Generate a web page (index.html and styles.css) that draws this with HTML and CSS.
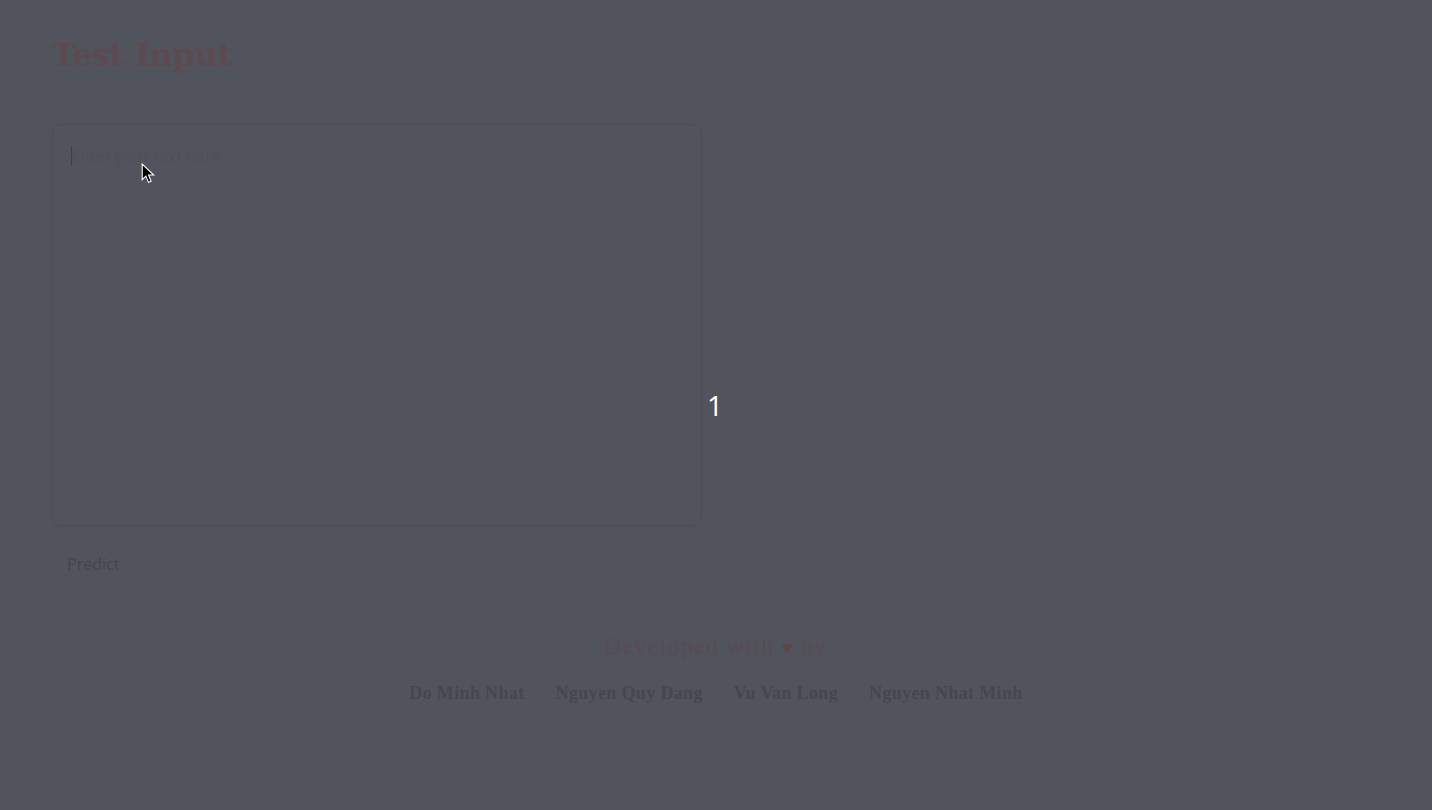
FILE: index.html
```html
<!DOCTYPE html>
<html lang="en">
<head>
<meta charset="utf-8">
<title>Test Input</title>
<link rel="stylesheet" href="styles.css">
</head>
<body>
<main class="page">
  <h1 class="title">Test Input</h1>
  <div class="input-row">
    <div class="textarea-wrap">
      <span class="caret"></span>
      <textarea class="text-input" placeholder="Enter your text here"></textarea>
    </div>
  </div>
  <div class="actions">
    <button class="predict-btn" type="button">Predict</button>
  </div>
  <footer class="footer">
    <p class="dev-line">Developed with <span class="heart">&#9829;</span> by</p>
    <ul class="names">
      <li>Do Minh Nhat</li>
      <li>Nguyen Quy Dang</li>
      <li>Vu Van Long</li>
      <li>Nguyen Nhat Minh</li>
    </ul>
  </footer>
</main>
<div class="step-badge">1</div>
<svg class="cursor" width="15" height="23" viewBox="0 0 14 22">
  <path d="M1 1 L1 16 L4.5 12.5 L7 18.5 L9.5 17.5 L7 11.5 L12 11.5 Z" fill="#000" stroke="#fff" stroke-width="1"/>
</svg>
</body>
</html>
```
FILE: styles.css
```css
html, body {
  margin: 0;
  padding: 0;
  background: #51545d;
  width: 1432px;
  height: 810px;
  overflow: hidden;
}
.page {
  padding: 0 52px;
  position: relative;
}
.title {
  margin: 0;
  padding-top: 31px;
  font-family: "DejaVu Serif", serif;
  font-weight: bold;
  font-size: 32px;
  line-height: 48px;
  color: #5c4a4f;
  letter-spacing: -0.3px;
}
.input-row {
  margin-top: 45px;
  display: flex;
}
.textarea-wrap {
  position: relative;
  width: 650px;
  height: 402px;
  box-sizing: border-box;
  border: 1px solid #554a50;
  border-radius: 8px;
}
.text-input {
  width: 100%;
  height: 100%;
  box-sizing: border-box;
  background: transparent;
  border: none;
  outline: none;
  resize: none;
  padding: 20px 18px;
  font-family: "Open Sans", sans-serif;
  font-size: 16px;
  color: #4a4d55;
}
.text-input::placeholder {
  color: #4d5058;
}
.caret {
  position: absolute;
  left: 18px;
  top: 21px;
  width: 1px;
  height: 20px;
  background: #3d4048;
}
.actions {
  margin-top: 20px;
}
.predict-btn {
  font-family: "Open Sans", sans-serif;
  font-size: 16px;
  color: #42454d;
  background: transparent;
  border: 1px solid #50535c;
  border-radius: 6px;
  padding: 6px 14px;
  cursor: pointer;
}
.footer {
  margin-top: 49px;
  text-align: center;
}
.dev-line {
  margin: 0;
  font-family: "Liberation Serif", serif;
  font-size: 24px;
  line-height: 30px;
  letter-spacing: 1.3px;
  color: #5b4b50;
}
.heart {
  font-size: 18px;
  color: #5f4549;
}
.names {
  list-style: none;
  margin: 18px 0 0;
  padding: 0;
  display: flex;
  justify-content: center;
  gap: 31px;
  font-family: "Liberation Serif", serif;
  font-weight: bold;
  font-size: 18px;
  line-height: 24px;
  letter-spacing: 0.35px;
  color: #44474f;
}
.step-badge {
  position: absolute;
  left: 707px;
  top: 388px;
  font-family: "Open Sans", sans-serif;
  font-size: 28px;
  line-height: 34px;
  color: #ffffff;
}
.cursor {
  position: absolute;
  left: 141px;
  top: 163px;
}
```
